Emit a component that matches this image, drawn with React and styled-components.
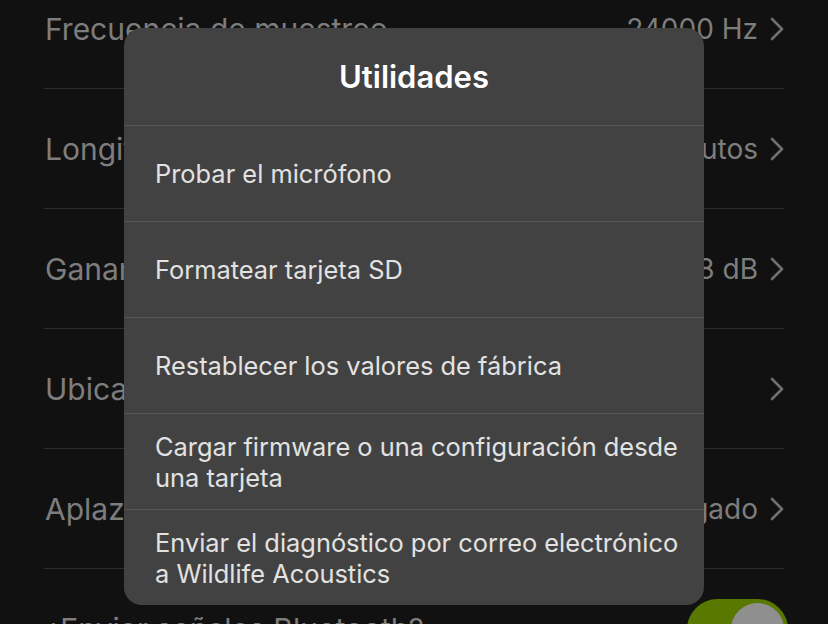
import React from "react";
import styled, { createGlobalStyle } from "styled-components";

const Global = createGlobalStyle`
  html, body {
    margin: 0;
    padding: 0;
    background: #111111;
    overflow: hidden;
  }
  body {
    font-family: Inter, "Noto Sans", sans-serif;
    -webkit-font-smoothing: antialiased;
  }
`;

const Screen = styled.div`
  position: relative;
  width: 828px;
  height: 624px;
  overflow: hidden;
  background: #111111;
`;

/* settings list, scrolled a little past its top */
const SettingsList = styled.div`
  display: flex;
  flex-direction: column;
  margin-top: -31px;
  padding: 0 44px;
`;

const SettingRow = styled.div`
  display: flex;
  align-items: center;
  justify-content: space-between;
  height: 120px;
  border-bottom: 1px solid #2c2c2c;
  box-sizing: border-box;
  &:last-child {
    border-bottom: none;
  }
`;

const SettingLabel = styled.span`
  font-size: 30px;
  color: #7d7d7d;
  padding-left: 1px;
`;

const SettingValue = styled.span`
  display: flex;
  align-items: center;
  gap: 12px;
  font-size: 28px;
  color: #7d7d7d;
`;

const Chevron = () => (
  <svg width="14" height="24" viewBox="0 0 14 24" fill="none">
    <path
      d="M2 2 L12 12 L2 22"
      stroke="#6f6f6f"
      strokeWidth="2.6"
      strokeLinecap="round"
      strokeLinejoin="round"
    />
  </svg>
);

const Toggle = styled.div`
  position: relative;
  width: 101px;
  height: 61px;
  border-radius: 31px;
  background: #587800;
  margin-right: -4px;
  flex-shrink: 0;
`;

const Knob = styled.div`
  position: absolute;
  top: 4px;
  right: 4px;
  width: 53px;
  height: 53px;
  border-radius: 50%;
  background: #8f8f8f;
`;

/* utilities sheet floating over the list */
const Sheet = styled.div`
  position: absolute;
  top: 28px;
  left: 124px;
  width: 580px;
  height: 577px;
  border-radius: 18px;
  background: #424242;
  overflow: hidden;
  display: flex;
  flex-direction: column;
`;

const SheetTitle = styled.h2`
  margin: 0;
  height: 97px;
  display: flex;
  align-items: center;
  justify-content: center;
  font-size: 31px;
  font-weight: 600;
  color: #ffffff;
`;

const SheetItem = styled.div`
  display: flex;
  align-items: center;
  min-height: 95px;
  flex-shrink: 0;
  padding: 0 22px 0 31px;
  border-top: 1px solid #575757;
  font-size: 25.4px;
  line-height: 31px;
  color: #e2e2e2;
`;

const settings = [
  { label: "Frecuencia de muestreo", value: "24000 Hz" },
  { label: "Longitud del archivo", value: "60 minutos" },
  { label: "Ganancia", value: "+18 dB" },
  { label: "Ubicación", value: "" },
  { label: "Aplazamiento", value: "Apagado" },
];

const utilities = [
  "Probar el micrófono",
  "Formatear tarjeta SD",
  "Restablecer los valores de fábrica",
  "Cargar firmware o una configuración desde una tarjeta",
  "Enviar el diagnóstico por correo electrónico a Wildlife Acoustics",
];

export default function App() {
  return (
    <Screen>
      <Global />
      <SettingsList>
        {settings.map((s) => (
          <SettingRow key={s.label}>
            <SettingLabel>{s.label}</SettingLabel>
            <SettingValue>
              {s.value}
              <Chevron />
            </SettingValue>
          </SettingRow>
        ))}
        <SettingRow>
          <SettingLabel>¿Enviar señales Bluetooth?</SettingLabel>
          <Toggle>
            <Knob />
          </Toggle>
        </SettingRow>
      </SettingsList>
      <Sheet>
        <SheetTitle>Utilidades</SheetTitle>
        {utilities.map((u) => (
          <SheetItem key={u}>{u}</SheetItem>
        ))}
      </Sheet>
    </Screen>
  );
}
